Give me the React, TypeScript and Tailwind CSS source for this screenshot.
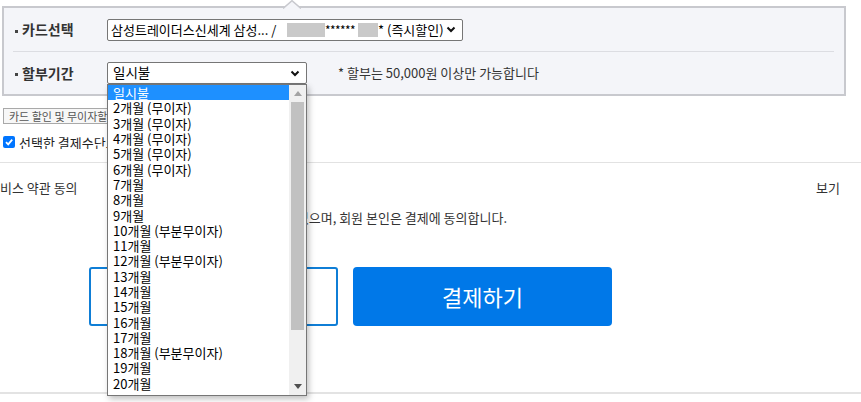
const CARD_TEXT = '삼성트레이더스신세계 삼성... /';

const INSTALLMENTS = [
  '일시불',
  '2개월 (무이자)',
  '3개월 (무이자)',
  '4개월 (무이자)',
  '5개월 (무이자)',
  '6개월 (무이자)',
  '7개월',
  '8개월',
  '9개월',
  '10개월 (부분무이자)',
  '11개월',
  '12개월 (부분무이자)',
  '13개월',
  '14개월',
  '15개월',
  '16개월',
  '17개월',
  '18개월 (부분무이자)',
  '19개월',
  '20개월',
];

function Chevron() {
  return (
    <svg width="10" height="7" viewBox="0 0 10 7" className="shrink-0">
      <polyline points="1.5,1.5 5,5 8.5,1.5" fill="none" stroke="#111" strokeWidth="2" />
    </svg>
  );
}

function Label({ text }: { text: string }) {
  return (
    <div className="w-[94px] flex items-center shrink-0">
      <span className="ml-[2px] w-[3px] h-[3px] bg-[#444] mt-[3px]"></span>
      <span className="ml-[4px] text-[14px] font-bold text-[#333]">{text}</span>
    </div>
  );
}

export default function App() {
  return (
    <div className="relative w-[861px] h-[402px] overflow-hidden bg-white text-[#333] font-['Noto_Sans_CJK_KR','Noto_Sans',sans-serif]">
      {/* Payment panel */}
      <div className="pt-[6px] pl-[2px]">
        <div className="relative w-[844px] h-[90px] border-2 border-[#c8c9ce] bg-[#f4f5f9] px-[9px]">
          <svg width="18" height="9" viewBox="0 0 18 9" className="absolute left-[279px] -top-[8px]">
            <polygon points="0,9 9,0 18,9" fill="#f4f5f9" />
            <polyline points="0,8.5 9,0.7 18,8.5" fill="none" stroke="#c8c9ce" strokeWidth="1.5" />
          </svg>

          {/* 카드선택 */}
          <div className="h-[43px] flex items-center">
            <Label text="카드선택" />
            <div className="w-[356px] h-[22px] border border-[#767676] rounded-[2px] bg-white flex items-center pl-[3px] pr-[6px] text-[13px] leading-none text-black">
              <span className="w-[176px] whitespace-nowrap shrink-0">{CARD_TEXT}</span>
              <span className="w-[38px] h-[14px] bg-[#c9c9c9] shrink-0"></span>
              <span className="w-[33px] overflow-hidden whitespace-nowrap text-[12px] tracking-[-0.6px] shrink-0">******</span>
              <span className="w-[20px] h-[14px] bg-[#c9c9c9] shrink-0"></span>
              <span className="whitespace-nowrap">* (즉시할인)</span>
              <span className="flex-1"></span>
              <Chevron />
            </div>
          </div>

          <div className="h-px bg-[#dcdde2] mr-[1px]"></div>

          {/* 할부기간 */}
          <div className="h-[42px] flex items-center">
            <Label text="할부기간" />
            <div className="w-[200px] h-[22px] border border-[#767676] rounded-[2px] bg-white flex items-center pl-[5px] pr-[6px] text-[13.5px] leading-none text-black">
              <span>일시불</span>
              <span className="flex-1"></span>
              <Chevron />
            </div>
            <span className="ml-[31px] text-[13px] text-[#333] whitespace-nowrap">* 할부는 50,000원 이상만 가능합니다</span>
          </div>
        </div>
      </div>

      {/* Card benefit box, cut off by the open dropdown */}
      <div className="mt-[12px] ml-[3px] w-[104px] h-[16px] border border-r-0 border-[#a9a9a9] bg-[#f7f7f7] flex items-center pl-[5px] text-[11px] leading-none text-[#555] whitespace-nowrap overflow-hidden">
        카드 할인 및 무이자할부 안내
      </div>

      {/* Save payment method */}
      <div className="mt-[11px] ml-[3px] h-[14px] flex items-center gap-[4px]">
        <span className="w-[12px] h-[12px] rounded-[2px] bg-[#0075ff] flex items-center justify-center shrink-0">
          <svg width="10" height="10" viewBox="0 0 10 10">
            <polyline points="2,5.2 4.2,7.4 8.2,2.6" fill="none" stroke="#fff" strokeWidth="1.8" />
          </svg>
        </span>
        <span className="w-[88px] overflow-hidden text-[13px] leading-none text-[#222] whitespace-nowrap">선택한 결제수단으로 다음에도 결제</span>
      </div>

      <div className="mt-[13px] h-px bg-[#e2e2e2]"></div>

      {/* Terms */}
      <div className="mt-[15px] h-[20px] flex items-center justify-between pr-[21px] text-[13px] text-[#333]">
        <span>비스 약관 동의</span>
        <span>보기</span>
      </div>

      <div className="mt-[10px] ml-[300px] w-[207px] h-[20px] flex items-center justify-end overflow-hidden text-[13px] text-[#333] whitespace-nowrap">
        하였으며, 회원 본인은 결제에 동의합니다.
      </div>

      {/* Buttons */}
      <div className="mt-[39px] flex">
        <div className="ml-[89px] w-[249px] h-[59px] border-2 border-[#0f7ed6] rounded-[3px] bg-white"></div>
        <button className="ml-[15px] w-[259px] h-[59px] rounded-[4px] bg-[#0078e8] text-white text-[22px] font-normal flex items-center justify-center">
          결제하기
        </button>
      </div>

      <div className="mt-[66px] h-[2px] bg-[#e3e3e3]"></div>

      {/* Open installment dropdown */}
      <div className="absolute left-[107px] top-[84px] w-[200px] h-[312px] border border-[#767676] bg-white shadow-[2px_3px_6px_rgba(0,0,0,0.25)] flex">
        <div className="flex-1 flex flex-col">
          {INSTALLMENTS.map((item, i) => (
            <div
              key={item}
              className={`h-[15.3px] flex items-center pl-[5px] text-[13px] leading-none whitespace-nowrap ${
                i === 0 ? 'bg-[#1e90ff] text-white' : 'text-black'
              }`}
            >
              {item}
            </div>
          ))}
        </div>
        <div className="w-[17px] bg-[#f0f0f0] flex flex-col items-center">
          <div className="h-[17px] flex items-center justify-center">
            <svg width="8" height="5" viewBox="0 0 8 5">
              <polygon points="0,5 4,0 8,5" fill="#a3a3a3" />
            </svg>
          </div>
          <div className="w-[13px] h-[228px] bg-[#c1c1c1]"></div>
          <div className="flex-1"></div>
          <div className="h-[17px] flex items-center justify-center">
            <svg width="8" height="5" viewBox="0 0 8 5">
              <polygon points="0,0 8,0 4,5" fill="#505050" />
            </svg>
          </div>
        </div>
      </div>
    </div>
  );
}
